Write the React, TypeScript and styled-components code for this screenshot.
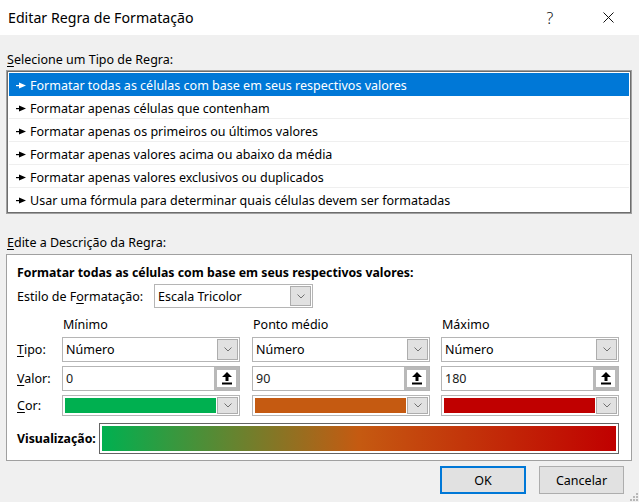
import React from "react";
import styled, { createGlobalStyle } from "styled-components";

const GlobalStyle = createGlobalStyle`
  html, body {
    margin: 0;
    padding: 0;
  }
  body {
    width: 639px;
    height: 502px;
    overflow: hidden;
    background: #f0f0f0;
    font-family: "Segoe UI", "Noto Sans", sans-serif;
    font-size: 12.5px;
    color: #000;
  }
  u {
    text-decoration-thickness: 1px;
    text-underline-offset: 2px;
  }
`;

const Dialog = styled.div`
  position: relative;
  width: 639px;
  height: 502px;
  display: flex;
  flex-direction: column;
  background: #f0f0f0;
`;

const TitleBar = styled.div`
  height: 35px;
  background: #fff;
  display: flex;
  align-items: center;
  padding-left: 8px;
  padding-right: 8px;
`;

const Title = styled.div`
  flex: 1;
  font-size: 14.2px;
  color: #000;
`;

const TitleButton = styled.div<{ $gap?: number }>`
  width: 46px;
  height: 35px;
  display: flex;
  align-items: center;
  justify-content: center;
  font-size: 16px;
  font-weight: 300;
  color: #111;
  margin-left: ${(p) => p.$gap || 0}px;
`;

const Body = styled.div`
  padding: 0 7px 0 6px;
  display: flex;
  flex-direction: column;
`;

const SectionLabel = styled.div<{ $top: number }>`
  margin-top: ${(p) => p.$top}px;
  height: 16px;
  line-height: 16px;
  padding-left: 1px;
`;

const RuleList = styled.div`
  margin-top: 2px;
  width: 626px;
  box-sizing: border-box;
  border: 1px solid #a0a0a0;
  box-shadow: inset 0 0 0 1px #6d6d6d;
  background: #fff;
  padding: 2px;
`;

const RuleRow = styled.div<{ $selected?: boolean }>`
  height: 23px;
  box-sizing: border-box;
  display: flex;
  align-items: center;
  gap: 4px;
  padding: 2px 0 0 7px;
  background: ${(p) => (p.$selected ? "#0078d7" : "#fff")};
  color: ${(p) => (p.$selected ? "#fff" : "#000")};
  border-bottom: 1px solid ${(p) => (p.$selected ? "#0078d7" : "#efefef")};
  &:last-child {
    border-bottom-color: #fff;
  }
`;

const DescBox = styled.div`
  margin-top: 3px;
  width: 626px;
  height: 207px;
  box-sizing: border-box;
  border: 1px solid #a0a0a0;
  background: #fff;
  padding: 10px 0 0 10px;
  display: flex;
  flex-direction: column;
`;

const Heading = styled.div`
  font-weight: 700;
  font-size: 12.3px;
  height: 16px;
  line-height: 16px;
`;

const StyleRow = styled.div`
  margin-top: 3px;
  display: flex;
  align-items: center;
`;

const StyleLabel = styled.div`
  width: 137px;
`;

const FieldBox = styled.div<{ $w?: number; $h: number }>`
  width: ${(p) => p.$w || 178}px;
  height: ${(p) => p.$h}px;
  box-sizing: border-box;
  border: 1px solid #b5b5b5;
  background: #fff;
  display: flex;
  align-items: stretch;
  padding: 1px;
`;

const FieldText = styled.div`
  flex: 1;
  display: flex;
  align-items: center;
  padding-left: 2px;
`;

const ValueText = styled(FieldText)`
  color: #1a1a1a;
`;

const DropButton = styled.div`
  width: 21px;
  box-sizing: border-box;
  border: 1px solid #adadad;
  background: #e1e1e1;
  display: flex;
  align-items: center;
  justify-content: center;
`;

const SpinButton = styled.div`
  width: 25px;
  margin: -1px -1px -1px 0;
  box-sizing: border-box;
  border: 3px solid #b9b9b9;
  background: #fff;
  display: flex;
  align-items: center;
  justify-content: center;
`;

const Swatch = styled.div<{ $color: string }>`
  flex: 1;
  margin: 1px;
  background: ${(p) => p.$color};
`;

const Grid = styled.div`
  margin-top: 9px;
  display: grid;
  grid-template-columns: 45px 190px 189px 178px;
  grid-template-rows: 16px 25px 25px 21px;
  row-gap: 4px;
  align-items: center;
`;

const ColHead = styled.div`
  line-height: 16px;
  padding-left: 1px;
`;

const RowLabel = styled.div``;

const PreviewRow = styled.div`
  margin-top: 7px;
  display: flex;
  align-items: center;
`;

const PreviewLabel = styled.div`
  width: 82px;
  font-weight: 700;
  font-size: 12.3px;
`;

const PreviewBar = styled.div`
  width: 520px;
  height: 31px;
  box-sizing: border-box;
  border: 1px solid #646464;
  padding: 2px;
  background: #fff;
`;

const Gradient = styled.div`
  height: 100%;
  background: linear-gradient(to right, #00b050 0%, #c55a11 50%, #c00000 100%);
`;

const Footer = styled.div`
  margin-top: 5px;
  display: flex;
  justify-content: flex-end;
  gap: 13px;
  padding-right: 15px;
`;

const DialogButton = styled.div<{ $primary?: boolean; $w: number }>`
  width: ${(p) => p.$w}px;
  height: 28px;
  box-sizing: border-box;
  border: ${(p) => (p.$primary ? "2px solid #0078d7" : "1px solid #adadad")};
  background: #e1e1e1;
  display: flex;
  align-items: center;
  justify-content: center;
`;

const Grip = styled.svg`
  position: absolute;
  right: 1px;
  bottom: 1px;
`;

const Bullet = () => (
  <svg width="10" height="7" viewBox="0 0 10 7">
    <rect x="0" y="3" width="4" height="1.2" fill="currentColor" />
    <polygon points="3,0.5 10,3.5 3,6.5" fill="currentColor" />
  </svg>
);

const Chevron = () => (
  <svg width="8" height="5" viewBox="0 0 8 5">
    <polyline points="0.5,0.5 4,4 7.5,0.5" fill="none" stroke="#707070" strokeWidth="1" />
  </svg>
);

const UpArrow = () => (
  <svg width="10" height="13" viewBox="0 0 10 13">
    <polygon points="5,0 10,5 6.5,5 6.5,9 3.5,9 3.5,5 0,5" fill="#000" />
    <rect x="0" y="10.5" width="10" height="2" fill="#000" />
  </svg>
);

const rules = [
  "Formatar todas as células com base em seus respectivos valores",
  "Formatar apenas células que contenham",
  "Formatar apenas os primeiros ou últimos valores",
  "Formatar apenas valores acima ou abaixo da média",
  "Formatar apenas valores exclusivos ou duplicados",
  "Usar uma fórmula para determinar quais células devem ser formatadas",
];

const points = [
  { head: "Mínimo", value: "0", color: "#00b050" },
  { head: "Ponto médio", value: "90", color: "#c55a11" },
  { head: "Máximo", value: "180", color: "#c00000" },
];

const App = () => {
  return (
    <Dialog>
      <GlobalStyle />
      <TitleBar>
        <Title>Editar Regra de Formatação</Title>
        <TitleButton>?</TitleButton>
        <TitleButton $gap={12}>
          <svg width="11" height="11" viewBox="0 0 11 11">
            <path d="M0.5 0.5 L10.5 10.5 M10.5 0.5 L0.5 10.5" stroke="#111" strokeWidth="1" />
          </svg>
        </TitleButton>
      </TitleBar>
      <Body>
        <SectionLabel $top={17}>
          <u>S</u>elecione um Tipo de Regra:
        </SectionLabel>
        <RuleList>
          {rules.map((r, i) => (
            <RuleRow key={r} $selected={i === 0}>
              <Bullet />
              <span>{r}</span>
            </RuleRow>
          ))}
        </RuleList>
        <SectionLabel $top={21}>
          <u>E</u>dite a Descrição da Regra:
        </SectionLabel>
        <DescBox>
          <Heading>Formatar todas as células com base em seus respectivos valores:</Heading>
          <StyleRow>
            <StyleLabel>
              Estilo de F<u>o</u>rmatação:
            </StyleLabel>
            <FieldBox $w={159} $h={24}>
              <FieldText>Escala Tricolor</FieldText>
              <DropButton>
                <Chevron />
              </DropButton>
            </FieldBox>
          </StyleRow>
          <Grid>
            <div />
            {points.map((p) => (
              <ColHead key={p.head}>{p.head}</ColHead>
            ))}
            <RowLabel>
              <u>T</u>ipo:
            </RowLabel>
            {points.map((p) => (
              <FieldBox key={p.head + "t"} $h={25}>
                <FieldText>Número</FieldText>
                <DropButton>
                  <Chevron />
                </DropButton>
              </FieldBox>
            ))}
            <RowLabel>
              <u>V</u>alor:
            </RowLabel>
            {points.map((p) => (
              <FieldBox key={p.head + "v"} $h={25}>
                <ValueText>{p.value}</ValueText>
                <SpinButton>
                  <UpArrow />
                </SpinButton>
              </FieldBox>
            ))}
            <RowLabel>
              <u>C</u>or:
            </RowLabel>
            {points.map((p) => (
              <FieldBox key={p.head + "c"} $h={21}>
                <Swatch $color={p.color} />
                <DropButton>
                  <Chevron />
                </DropButton>
              </FieldBox>
            ))}
          </Grid>
          <PreviewRow>
            <PreviewLabel>Visualização:</PreviewLabel>
            <PreviewBar>
              <Gradient />
            </PreviewBar>
          </PreviewRow>
        </DescBox>
      </Body>
      <Footer>
        <DialogButton $primary $w={86}>
          OK
        </DialogButton>
        <DialogButton $w={85}>Cancelar</DialogButton>
      </Footer>
      <Grip width="8" height="8" viewBox="0 0 8 8">
        <rect x="6" y="0" width="2" height="2" fill="#b8b8b8" />
        <rect x="3" y="3" width="2" height="2" fill="#b8b8b8" />
        <rect x="6" y="3" width="2" height="2" fill="#b8b8b8" />
        <rect x="0" y="6" width="2" height="2" fill="#b8b8b8" />
        <rect x="3" y="6" width="2" height="2" fill="#b8b8b8" />
        <rect x="6" y="6" width="2" height="2" fill="#b8b8b8" />
      </Grip>
    </Dialog>
  );
};

export default App;
